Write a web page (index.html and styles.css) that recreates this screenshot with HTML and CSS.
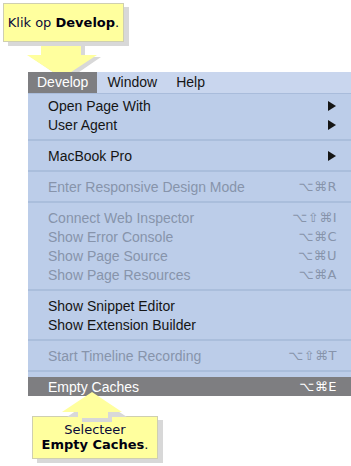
FILE: index.html
```html
<!DOCTYPE html>
<html>
<head>
<meta charset="utf-8">
<link rel="stylesheet" href="styles.css">
</head>
<body>
<div class="page">
  <svg class="arrow-top" width="110" height="45" viewBox="0 0 110 45">
    <polygon class="shadow" points="25,4 65,4 65,17 81,17 46,41 11,17 25,17" transform="translate(4,0)"/>
    <polygon class="fill" points="25,0 65,0 65,15 81,15 46,38 11,15 25,15"/>
  </svg>
  <div class="callout callout-top">Klik op <b>Develop</b>.</div>

  <div class="menu">
    <div class="bar">
      <span class="bar-item active">Develop</span>
      <span class="bar-item">Window</span>
      <span class="bar-item">Help</span>
    </div>
    <div class="dropdown">
      <div class="item"><span>Open Page With</span><span class="sub"></span></div>
      <div class="item"><span>User Agent</span><span class="sub"></span></div>
      <div class="sep"></div>
      <div class="item"><span>MacBook Pro</span><span class="sub"></span></div>
      <div class="sep"></div>
      <div class="item off"><span>Enter Responsive Design Mode</span><span class="key">⌥⌘R</span></div>
      <div class="sep"></div>
      <div class="item off"><span>Connect Web Inspector</span><span class="key">⌥⇧⌘I</span></div>
      <div class="item off"><span>Show Error Console</span><span class="key">⌥⌘C</span></div>
      <div class="item off"><span>Show Page Source</span><span class="key">⌥⌘U</span></div>
      <div class="item off"><span>Show Page Resources</span><span class="key">⌥⌘A</span></div>
      <div class="sep"></div>
      <div class="item"><span>Show Snippet Editor</span></div>
      <div class="item"><span>Show Extension Builder</span></div>
      <div class="sep"></div>
      <div class="item off"><span>Start Timeline Recording</span><span class="key">⌥⇧⌘T</span></div>
      <div class="sep"></div>
      <div class="item hl"><span>Empty Caches</span><span class="key">⌥⌘E</span></div>
    </div>
  </div>

  <svg class="arrow-bottom" width="110" height="40" viewBox="0 0 110 40">
    <polygon class="shadow" points="46,3 77,23 62,23 62,28 32,28 32,23 17,23" transform="translate(4,2)"/>
    <polygon class="fill" points="46,0 76,20 62,20 62,26 32,26 32,20 16,20"/>
  </svg>
  <div class="callout callout-bottom">Selecteer<br><b>Empty Caches</b>.</div>
</div>
</body>
</html>
```

FILE: styles.css
```css
html, body {
  margin: 0;
  padding: 0;
  background: #ffffff;
}

.page {
  position: relative;
  width: 351px;
  height: 466px;
  overflow: hidden;
}

.menu {
  position: relative;
  z-index: 2;
  margin: 72px 0 0 28px;
  width: 323px;
  font-family: "Liberation Sans", Arial, sans-serif;
  font-size: 14px;
  color: #151515;
}

.bar {
  display: flex;
  height: 21px;
  background: #c9d6ee;
  border-bottom: 1px solid #a9bcdb;
}

.bar-item {
  line-height: 21px;
  padding: 0 9px 0 10px;
}

.bar-item.active {
  background: #7e7e81;
  color: #ffffff;
  padding: 0 9px;
}

.dropdown {
  background: #bccde9;
  padding-top: 2px;
}

.item {
  display: flex;
  justify-content: space-between;
  align-items: center;
  height: 19px;
  padding: 0 15px 0 20px;
}

.item.off {
  color: #8794ab;
}

.item.hl {
  background: #7e7e81;
  color: #ffffff;
}

.key {
  font-family: "DejaVu Sans", sans-serif;
  font-size: 13px;
  letter-spacing: 0.5px;
  margin-right: -1px;
}

.sub {
  width: 0;
  height: 0;
  border-top: 5px solid transparent;
  border-bottom: 5px solid transparent;
  border-left: 8px solid #151515;
}

.sep {
  height: 12px;
  display: flex;
  align-items: center;
}

.sep::before {
  content: "";
  flex: 1;
  height: 2px;
  background: #aabedc;
}

.callout {
  position: absolute;
  z-index: 3;
  background: #ffff9e;
  border: 1px solid #cfcfb0;
  box-shadow: 5px 4px 0 #d8d8d8;
  font-family: "DejaVu Sans", Verdana, sans-serif;
  font-size: 13px;
  color: #0a0a3a;
  text-align: center;
}

.callout b {
  font-weight: bold;
  color: #000010;
}

.callout-top {
  left: 3px;
  top: 3px;
  width: 119px;
  height: 37px;
  line-height: 37px;
}

.callout-bottom {
  left: 32px;
  top: 416px;
  width: 126px;
  height: 43px;
  line-height: 15px;
  padding-top: 5px;
  box-sizing: border-box;
}

.arrow-top {
  position: absolute;
  z-index: 1;
  left: 16px;
  top: 40px;
}

.arrow-bottom {
  position: absolute;
  z-index: 4;
  left: 46px;
  top: 392px;
}

.fill {
  fill: #ffff9e;
}

.shadow {
  fill: #d8d8d8;
}
```
